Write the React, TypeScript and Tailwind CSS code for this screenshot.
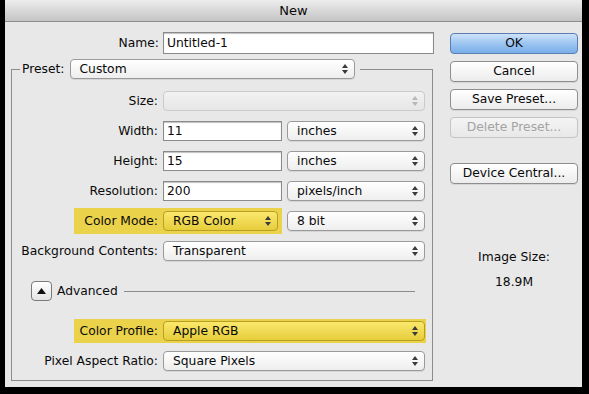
import React from 'react';

const Arrows: React.FC<{ dim?: boolean }> = ({ dim }) => (
  <svg width="6" height="10" viewBox="0 0 6 10" className="shrink-0">
    <path d="M3 0 L6 4 L0 4 Z" fill={dim ? '#b8b8b8' : '#3a3a3a'} />
    <path d="M3 10 L6 6 L0 6 Z" fill={dim ? '#b8b8b8' : '#3a3a3a'} />
  </svg>
);

type SelectProps = { value?: string; w: string; kind?: 'normal' | 'disabled' | 'yellow' };

const Select: React.FC<SelectProps> = ({ value = '', w, kind = 'normal' }) => {
  const look =
    kind === 'yellow'
      ? 'border-[#b89f22] bg-gradient-to-b from-[#fbe86c] to-[#e6cd3a]'
      : kind === 'disabled'
      ? 'border-[#cacaca] bg-gradient-to-b from-[#f2f2f2] to-[#e6e6e6]'
      : 'border-[#9a9a9a] bg-gradient-to-b from-white to-[#eeeeee] shadow-[0_1px_0_rgba(0,0,0,0.08)]';
  return (
    <div className={`${w} h-[20px] shrink-0 rounded-[4px] border flex items-center pl-[9px] pr-[6px] ${look}`}>
      <span className="flex-1 leading-none">{value}</span>
      <Arrows dim={kind === 'disabled'} />
    </div>
  );
};

const Input: React.FC<{ value: string; w: string; h?: string }> = ({ value, w, h = 'h-[20px]' }) => (
  <div className={`${w} ${h} shrink-0 border border-[#8a8a8a] bg-white shadow-[inset_0_1px_1px_rgba(0,0,0,0.25)] flex items-center pl-[3px]`}>
    {value}
  </div>
);

const Button: React.FC<{ label: string; primary?: boolean; disabled?: boolean }> = ({ label, primary, disabled }) => (
  <div
    className={`w-[128px] h-[21px] rounded-[4px] border flex items-center justify-center ${
      primary
        ? 'border-[#5b7db3] bg-gradient-to-b from-[#cfe2f8] via-[#9cc5f1] to-[#79aeea]'
        : disabled
        ? 'border-[#c4c4c4] bg-gradient-to-b from-[#f4f4f4] to-[#e8e8e8] text-[#a4a4a4]'
        : 'border-[#8e8e8e] bg-gradient-to-b from-white to-[#ececec] shadow-[0_1px_0_rgba(0,0,0,0.08)]'
    }`}
  >
    {label}
  </div>
);

const Row: React.FC<{ label: string; children: React.ReactNode }> = ({ label, children }) => (
  <div className="flex items-center h-[20px]">
    <div className="w-[147px] text-right pr-px whitespace-nowrap">{label}</div>
    <div className="ml-[4px] flex items-center gap-[5px]">{children}</div>
  </div>
);

export default function App() {
  return (
    <div className="w-[589px] h-[394px] bg-black pl-[5px] pr-[7px] pb-[7px] flex flex-col font-['DejaVu_Sans',sans-serif] text-[12.3px] text-[#0a0a0a]">
      <div className="flex-1 flex flex-col bg-[#e8e8e8]">
        {/* title bar */}
        <div className="h-[22px] shrink-0 bg-gradient-to-b from-[#ededed] to-[#c4c4c4] border-b border-[#8f8f8f] text-center text-[13px] leading-[21px]">
          New
        </div>

        <div className="flex flex-1">
          {/* form */}
          <div className="w-[440px] flex flex-col">
            <div className="flex items-center mt-[10px]">
              <div className="w-[154px] text-right">Name:</div>
              <div className="ml-[4px]">
                <Input value="Untitled-1" w="w-[271px]" h="h-[22px]" />
              </div>
            </div>

            <fieldset className="mt-[5px] ml-[6px] w-[422px] border border-[#8c8c8c] pt-[12px] pb-[9px]">
              <legend className="ml-[8px] pl-[2px] pr-[5px] flex items-center">
                <span>Preset:</span>
                <div className="ml-[5px]">
                  <Select value="Custom" w="w-[285px]" />
                </div>
              </legend>

              <div className="flex flex-col gap-[10px]">
                <Row label="Size:">
                  <Select w="w-[262px]" kind="disabled" />
                </Row>
                <Row label="Width:">
                  <Input value="11" w="w-[119px]" />
                  <Select value="inches" w="w-[138px]" />
                </Row>
                <Row label="Height:">
                  <Input value="15" w="w-[119px]" />
                  <Select value="inches" w="w-[138px]" />
                </Row>
                <Row label="Resolution:">
                  <Input value="200" w="w-[119px]" />
                  <Select value="pixels/inch" w="w-[138px]" />
                </Row>
                <div className="flex items-center h-[20px]">
                  <div className="ml-[62px] w-[208px] h-[26px] bg-[#ead34a] flex items-center pr-[4px]">
                    <div className="flex-1 text-right pr-[5px]">Color Mode:</div>
                    <Select value="RGB Color" w="w-[115px]" kind="yellow" />
                  </div>
                  <div className="ml-[5px]">
                    <Select value="8 bit" w="w-[138px]" />
                  </div>
                </div>
                <Row label="Background Contents:">
                  <Select value="Transparent" w="w-[262px]" />
                </Row>
              </div>

              <div className="flex items-center mt-[20px] h-[20px]">
                <div className="ml-[19px] w-[21px] h-[20px] rounded-[4px] border border-[#7a7a7a] bg-gradient-to-b from-white to-[#e4e4e4] flex items-center justify-center">
                  <svg width="9" height="6" viewBox="0 0 9 6">
                    <path d="M4.5 0 L9 6 L0 6 Z" fill="#111" />
                  </svg>
                </div>
                <span className="ml-[5px]">Advanced</span>
                <div className="flex-1 h-px bg-[#8c8c8c] ml-[6px] mr-[17px]" />
              </div>

              <div className="flex items-center mt-[18px]">
                <div className="ml-[62px] w-[352px] h-[24px] bg-[#ead34a] flex items-center pr-px">
                  <div className="flex-1 text-right pr-[5px]">Color Profile:</div>
                  <Select value="Apple RGB" w="w-[262px]" kind="yellow" />
                </div>
              </div>

              <div className="mt-[8px]">
                <Row label="Pixel Aspect Ratio:">
                  <Select value="Square Pixels" w="w-[262px]" />
                </Row>
              </div>
            </fieldset>
          </div>

          {/* buttons */}
          <div className="flex-1 pl-[5px] flex flex-col">
            <div className="mt-[11px] flex flex-col gap-[7px]">
              <Button label="OK" primary />
              <Button label="Cancel" />
              <Button label="Save Preset..." />
              <Button label="Delete Preset..." disabled />
            </div>
            <div className="mt-[25px]">
              <Button label="Device Central..." />
            </div>
            <div className="w-[128px] text-center mt-[65px] leading-[16px]">Image Size:</div>
            <div className="w-[128px] text-center mt-[9px] leading-[16px]">18.9M</div>
          </div>
        </div>
      </div>
    </div>
  );
}
